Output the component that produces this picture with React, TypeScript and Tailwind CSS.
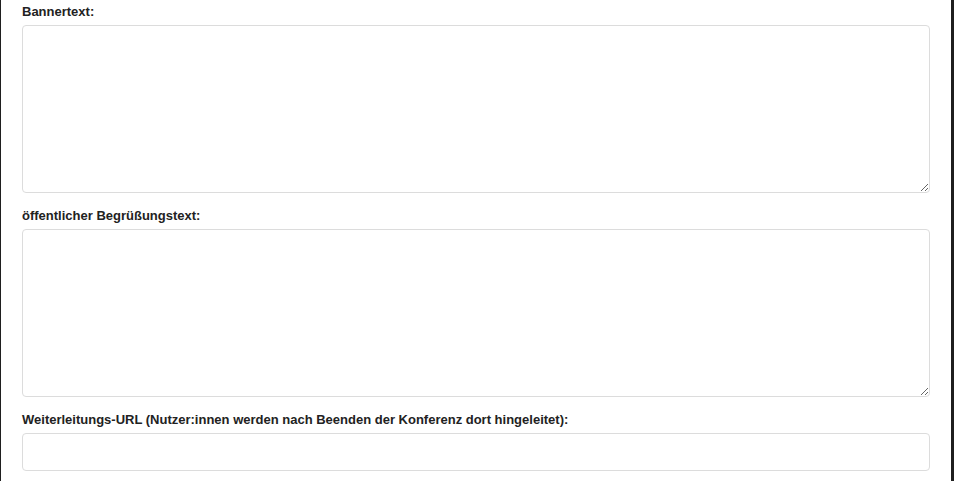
import React from "react";

export default function App() {
  const label =
    "block text-[13px] leading-[16px] font-bold text-[#222] mb-[5px]";
  const field =
    "block w-full border border-[#dcdcdc] rounded-[4px] bg-white outline-none";
  return (
    <div
      className="flex w-[954px] h-[481px] overflow-hidden bg-white"
      style={{ fontFamily: '"Liberation Sans", Arial, Helvetica, sans-serif' }}
    >
      <div className="w-[1px] bg-[#1f1f1f]" />
      <div className="flex-1 px-[21px] pt-[4px]">
        <label className={label}>Bannertext:</label>
        <textarea className={`${field} h-[168px] resize-y`} />
        <label className={`${label} mt-[15px]`}>öffentlicher Begrüßungstext:</label>
        <textarea className={`${field} h-[168px] resize-y`} />
        <label className={`${label} mt-[15px]`}>
          Weiterleitungs-URL (Nutzer:innen werden nach Beenden der Konferenz dort hingeleitet):
        </label>
        <input type="text" className={`${field} h-[38px]`} />
      </div>
      <div className="w-[3px] bg-[#1f1f1f]" />
    </div>
  );
}
